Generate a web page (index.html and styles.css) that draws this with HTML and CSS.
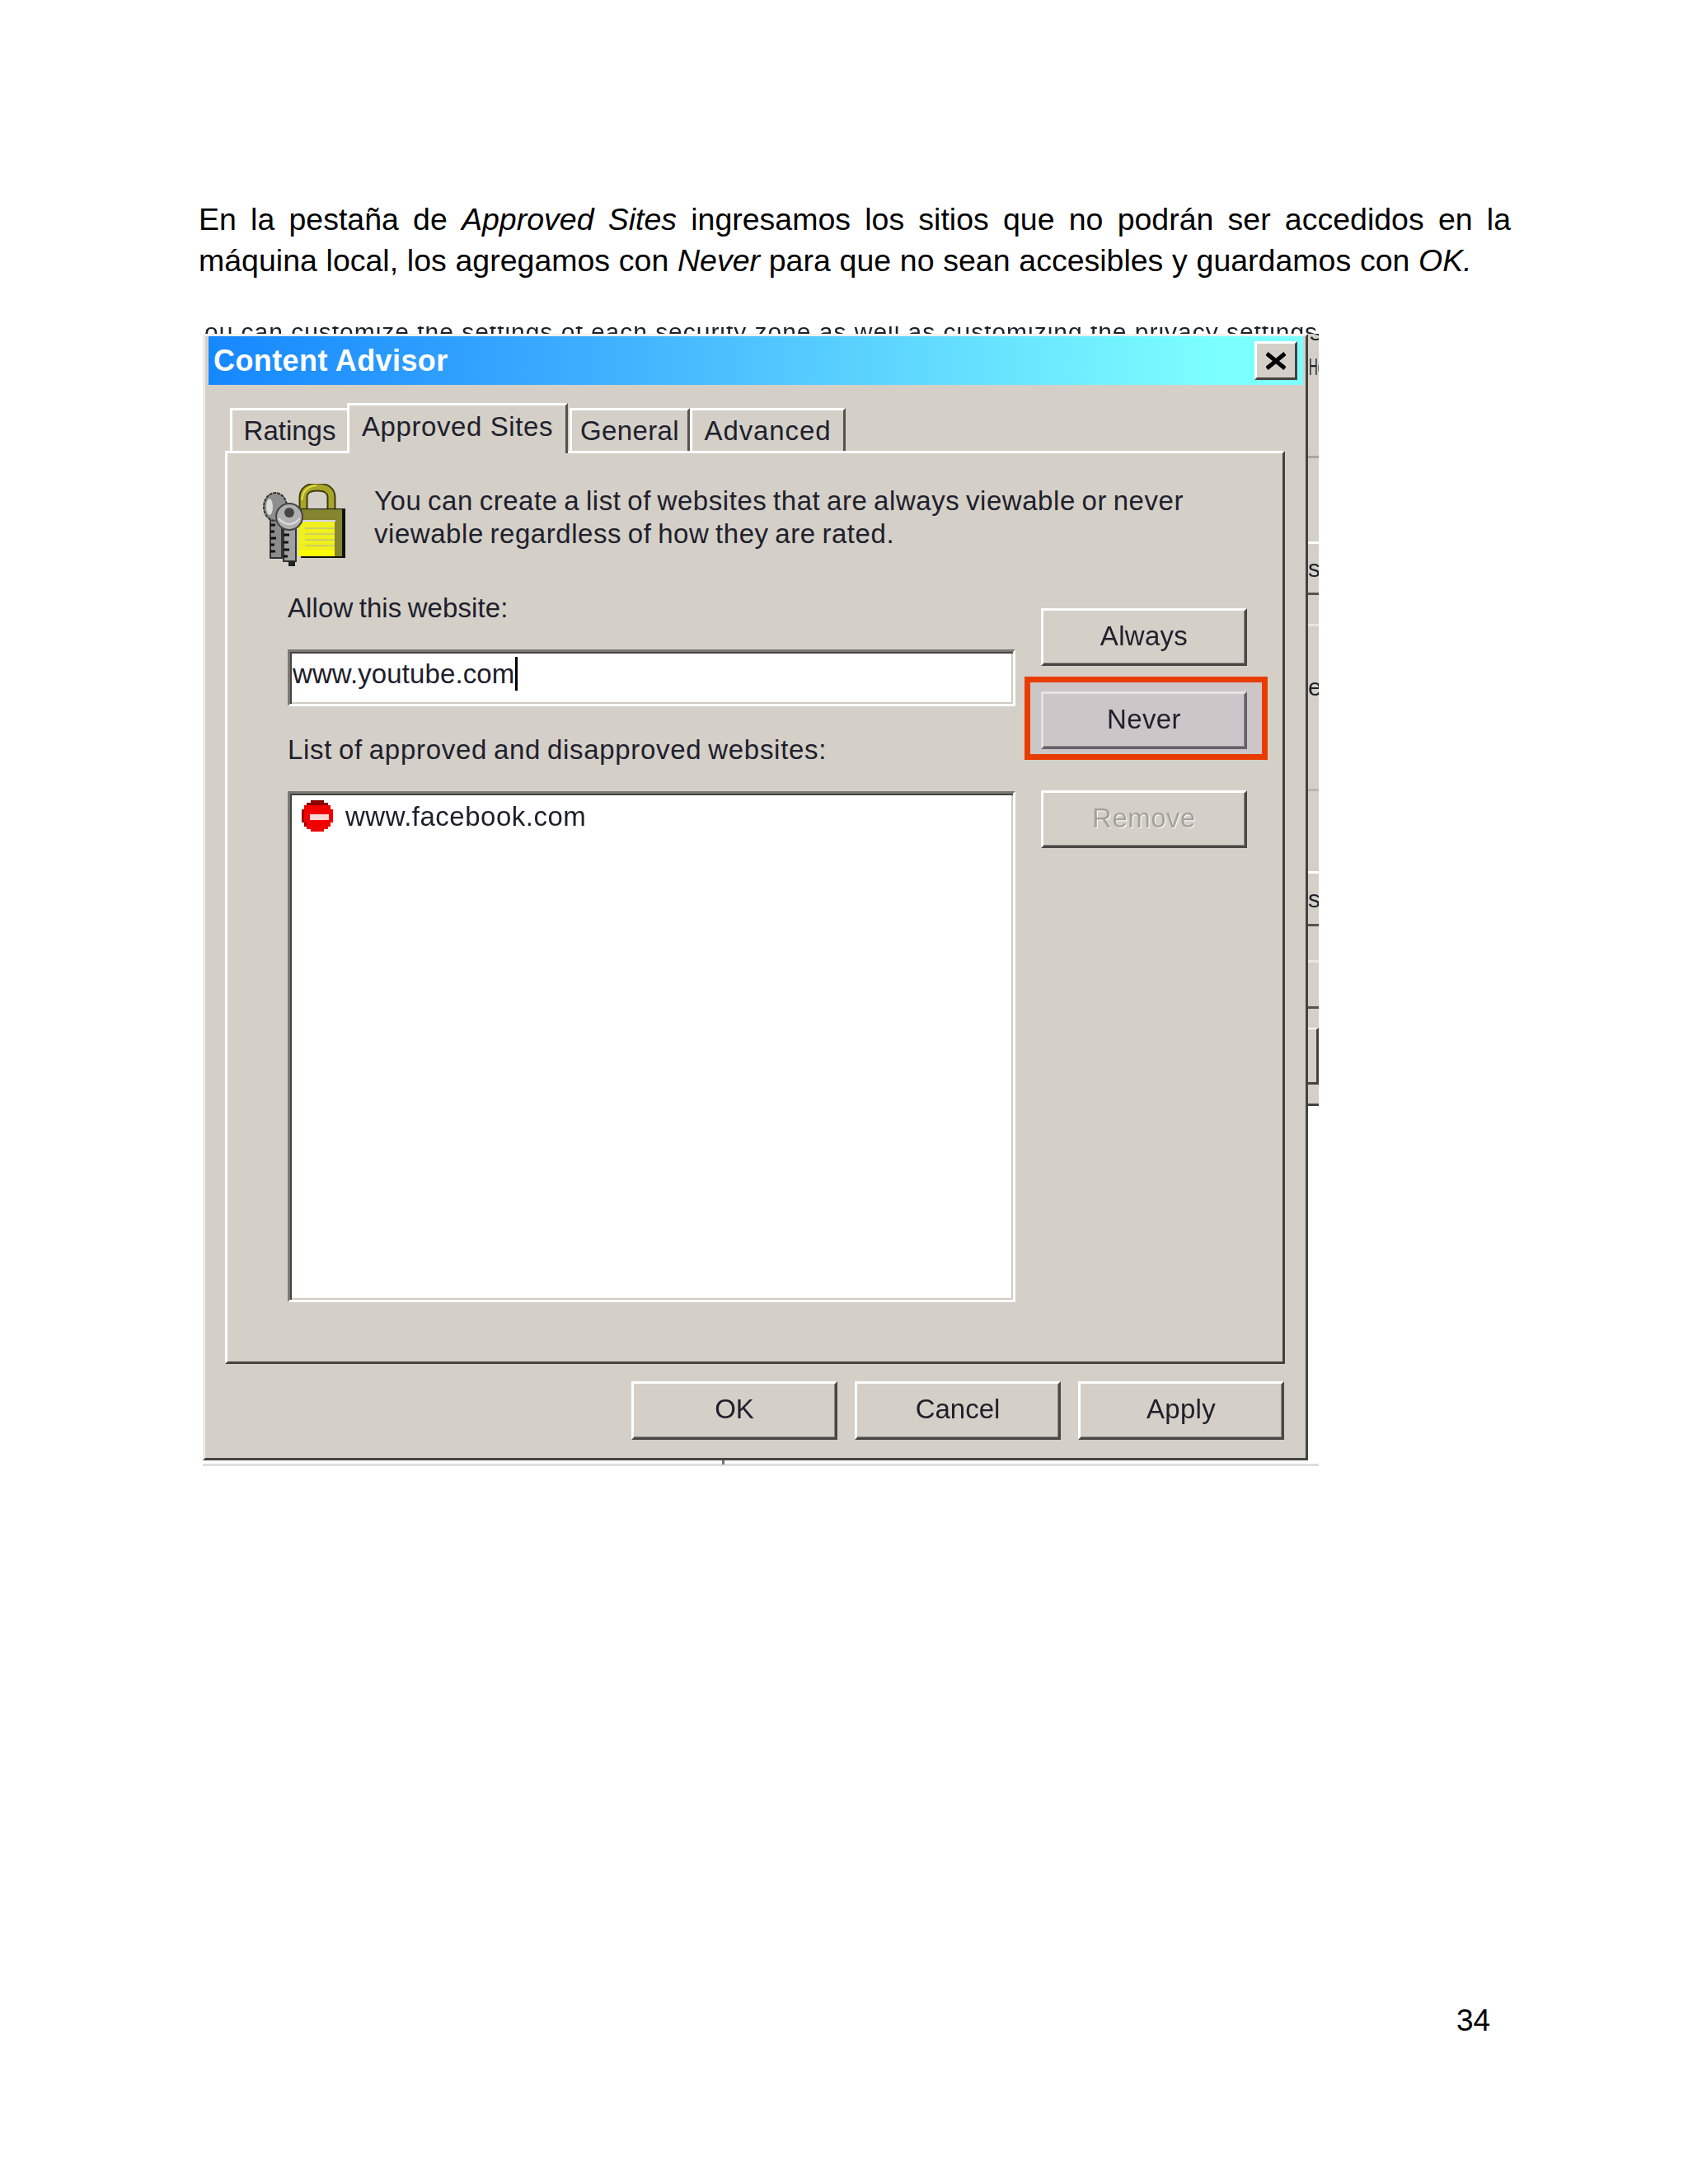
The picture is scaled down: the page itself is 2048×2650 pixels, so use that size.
FILE: index.html
```html
<!DOCTYPE html>
<html lang="es">
<head>
    <meta charset="UTF-8">
    <title>Content Advisor</title>
    <link rel="stylesheet" href="styles.css">
</head>
<body>
    <p class="intro">En la pestaña de <em>Approved Sites</em> ingresamos los sitios que no podrán ser accedidos en la máquina local, los agregamos con <em>Never</em> para que no sean accesibles y guardamos con <em>OK.</em></p>

    <div class="shot">
        <div class="behind-text">ou can customize the settings of each security zone as well as customizing the privacy settings</div>
        <div class="shot-row">
            <div class="dialog">
                <div class="titlebar">
                    <span class="title">Content Advisor</span>
                    <button class="close" aria-label="Close">
                        <svg width="24" height="24" viewBox="0 0 24 24"><path d="M1 3 L23 21 M23 3 L1 21" stroke="#000" stroke-width="5" fill="none"/></svg>
                    </button>
                </div>

                <div class="tabs">
                    <div class="tab tab-ratings">Ratings</div>
                    <div class="tab tab-active">Approved Sites</div>
                    <div class="tab tab-general">General</div>
                    <div class="tab tab-advanced">Advanced</div>
                </div>

                <div class="sheet">
                    <div class="info">
                        <svg class="lock-icon" width="102" height="100" viewBox="0 0 102 100">
                            <!-- shackle -->
                            <path d="M50 36 V17 Q50 4 67 4 Q84 4 84 17 V36" fill="none" stroke="#3a3a10" stroke-width="11"/>
                            <path d="M50 36 V17 Q50 4 67 4 Q84 4 84 17 V36" fill="none" stroke="#a8a428" stroke-width="7"/>
                            <path d="M48 20 Q50 3 66 2" fill="none" stroke="#e6e23c" stroke-width="2"/>
                            <!-- body -->
                            <rect x="47" y="30" width="54" height="60" fill="#111"/>
                            <rect x="47" y="31" width="50" height="57" fill="#85852f"/>
                            <rect x="44" y="44" width="45" height="2" fill="#d8d4e8"/>
                            <rect x="44" y="46" width="44" height="42" fill="#f0f01c"/>
                            <rect x="52" y="53" width="36" height="2" fill="#cfcf62"/>
                            <rect x="52" y="60" width="36" height="2" fill="#cfcf62"/>
                            <rect x="52" y="67" width="36" height="2" fill="#cfcf62"/>
                            <rect x="52" y="74" width="36" height="2" fill="#cfcf62"/>
                            <rect x="44" y="81" width="44" height="6" fill="#ffff00"/>
                            <!-- back key -->
                            <rect x="10" y="40" width="14" height="50" fill="#8c8c8c" stroke="#333" stroke-width="2"/>
                            <ellipse cx="16" cy="28" rx="14" ry="17" fill="#8e8e8e" stroke="#333" stroke-width="2" stroke-dasharray="4 1"/>
                            <ellipse cx="9" cy="28" rx="4" ry="10" fill="#dcdcdc"/>
                            <path d="M10 50h6 M10 58h5 M10 66h7 M10 74h5 M10 82h6" stroke="#111" stroke-width="3"/>
                            <!-- front key -->
                            <rect x="26" y="52" width="15" height="42" fill="#a0a0a0" stroke="#333" stroke-width="2"/>
                            <circle cx="33" cy="40" r="16" fill="#b0b0b0" stroke="#444" stroke-width="2"/>
                            <circle cx="33" cy="35" r="6" fill="#444"/>
                            <path d="M20 42 Q33 56 46 42" fill="none" stroke="#e0e0e0" stroke-width="2"/>
                            <rect x="32" y="94" width="8" height="6" fill="#222"/>
                            <path d="M26 62h7 M26 71h6 M26 80h7 M26 88h5" stroke="#111" stroke-width="3"/>
                        </svg>
                        <p class="info-text">You can create a list of websites that are always viewable or never<br>viewable regardless of how they are rated.</p>
                    </div>

                    <div class="form">
                        <div class="form-left">
                            <label class="field-label">Allow this website:</label>
                            <div class="site-input">www.youtube.com<span class="caret"></span></div>
                            <label class="field-label list-label">List of approved and disapproved websites:</label>
                            <div class="site-list">
                                <div class="site-row">
                                    <svg class="block-icon" width="38" height="38" viewBox="0 0 38 38" shape-rendering="crispEdges">
                                        <path d="M11 0H27V3H32V6H35V11H38V27H35V32H32V35H27V38H11V35H6V32H3V27H0V11H3V6H6V3H11Z" fill="#f00000"/>
                                        <path d="M11 0H27V3H32V6H6V3H11Z" fill="#8a0000"/>
                                        <path d="M0 11H3V27H6V32H3V27H0Z" fill="#a00000"/>
                                        <rect x="10" y="17" width="23" height="7" fill="#ffd8d8"/>
                                    </svg>
                                    <span class="site-name">www.facebook.com</span>
                                </div>
                            </div>
                        </div>
                        <div class="form-right">
                            <button class="btn btn-always">Always</button>
                            <div class="marked">
                                <button class="btn btn-never">Never</button>
                            </div>
                            <button class="btn btn-remove" disabled>Remove</button>
                        </div>
                    </div>
                </div>

                <div class="footer">
                    <button class="btn">OK</button>
                    <button class="btn">Cancel</button>
                    <button class="btn btn-apply">Apply</button>
                </div>
            </div>

            <div class="behind-edge">
                <div class="edge-top"><span>s</span></div>
                <div class="edge-seg edge-a"><span>Hc</span></div>
                <div class="edge-seg edge-b"></div>
                <div class="edge-seg edge-c"><span>s</span></div>
                <div class="edge-seg edge-d"></div>
                <div class="edge-seg edge-e"><span>e</span></div>
                <div class="edge-seg edge-f"></div>
                <div class="edge-seg edge-g"><span>s</span></div>
                <div class="edge-seg edge-h"></div>
                <div class="edge-seg edge-i"></div>
                <div class="edge-thumb-wrap"><div class="edge-thumb"></div></div>
                <div class="edge-seg edge-j"></div>
            </div>
        </div>
        <div class="behind-bottom"><span class="tick"></span></div>
    </div>

    <div class="page-number">34</div>
</body>
</html>
```

FILE: styles.css
```css
* {
    box-sizing: border-box;
}

html, body {
    margin: 0;
    background: #fff;
}

body {
    height: 2650px;
    overflow: hidden;
    font-family: "Liberation Sans", Arial, sans-serif;
    color: #000;
}

.intro {
    margin: 0 0 0 241px;
    padding-top: 241px;
    width: 1592px;
    font-size: 37.5px;
    line-height: 50px;
    text-align: justify;
    word-spacing: 0.3px;
}

/* screenshot of the dialog, soft like the scaled original */
.shot {
    margin: 55px 0 0 246px;
    width: 1354px;
    font-size: 33px;
    color: #20202c;
    filter: blur(0.4px);
}

.behind-text {
    height: 9px;
    line-height: 13px;
    overflow: hidden;
    white-space: nowrap;
    font-size: 30px;
    letter-spacing: 0.97px;
    padding-left: 2px;
}

.shot-row {
    display: flex;
}

.dialog {
    width: 1341px;
    height: 1367px;
    flex: none;
    background: #d4d0c8;
    border: 3px solid;
    border-color: #f4f2ee #45433f #45433f #eeece8;
    padding: 0 3px 0 4px;
}

.titlebar {
    height: 59px;
    display: flex;
    align-items: center;
    justify-content: space-between;
    padding: 0 7px 0 6px;
    background: linear-gradient(to right, #1688ff, #38a8ff 30%, #66e0ff 70%, #7cffff 92%);
}

.title {
    color: #fff;
    font-size: 36px;
    font-weight: bold;
    letter-spacing: 0.4px;
}

.close {
    width: 52px;
    height: 47px;
    padding: 0;
    display: flex;
    align-items: center;
    justify-content: center;
    background: #d4d0c8;
    border: 3px solid;
    border-color: #fff #45433f #45433f #fff;
}

.tabs {
    display: flex;
    align-items: flex-end;
    margin: 22px 0 0 26px;
    height: 58px;
}

.tab {
    position: relative;
    height: 52px;
    display: flex;
    align-items: center;
    justify-content: center;
    background: #d4d0c8;
    border-top: 3px solid #fff;
    border-left: 3px solid #fff;
    border-right: 3px solid #55534f;
    letter-spacing: 0.4px;
}

.tab-ratings {
    width: 142px;
    border-right: 0;
    letter-spacing: 0;
}

.tab-active {
    z-index: 1;
    width: 268px;
    height: 61px;
    margin-bottom: -3px;
    padding-bottom: 6px;
    letter-spacing: 0.6px;
}

.tab-general {
    width: 146px;
    margin-left: 2px;
}

.tab-advanced {
    width: 189px;
    letter-spacing: 0.9px;
}

.sheet {
    height: 1108px;
    margin: 0 22px 0 20px;
    padding: 37px 0 0 42px;
    border: 3px solid;
    border-color: #fff #45433f #45433f #fff;
}

.info {
    display: flex;
    gap: 34px;
    height: 131px;
}

.lock-icon {
    flex: none;
}

.info-text {
    margin: 1px 0 0;
    line-height: 40px;
    word-spacing: -2px;
    letter-spacing: 0.55px;
}

.form {
    display: grid;
    grid-template-columns: 883px 250px;
    column-gap: 31px;
    margin-left: 31px;
}

.field-label {
    display: block;
    line-height: 40px;
    word-spacing: -2px;
    letter-spacing: 0.1px;
}

.list-label {
    margin-top: 33px;
    letter-spacing: 0.7px;
}

.site-input {
    display: flex;
    align-items: center;
    height: 69px;
    margin-top: 30px;
    padding: 0 0 10px 3px;
    background: #fff;
    border: 3px solid;
    border-color: #7a7875 #fff #fff #7a7875;
    box-shadow: inset 2px 2px 0 #45433f, inset -2px -2px 0 #cfcbc3;
    letter-spacing: 0.1px;
}

.caret {
    width: 3px;
    height: 41px;
    margin-left: 1px;
    background: #000;
}

.site-list {
    height: 620px;
    margin-top: 30px;
    padding: 6px 0 0 14px;
    background: #fff;
    border: 3px solid;
    border-color: #7a7875 #fff #fff #7a7875;
    box-shadow: inset 2px 2px 0 #45433f, inset -2px -2px 0 #cfcbc3;
}

.site-row {
    display: flex;
    align-items: center;
    gap: 15px;
    letter-spacing: 0.5px;
}

.site-name {
    padding-top: 3px;
}

.block-icon {
    flex: none;
}

.form-right {
    display: flex;
    flex-direction: column;
    padding-top: 20px;
}

.btn {
    display: block;
    width: 250px;
    height: 70px;
    padding: 0 0 3px;
    font-family: inherit;
    font-size: 33px;
    color: #20202c;
    background: #d4d0c8;
    border: 3px solid;
    border-color: #fff #4a4844 #4a4844 #fff;
    box-shadow: inset -1px -1px 0 #8a8884;
}

.btn-always {
    letter-spacing: 0.3px;
}

.btn-never {
    background: #cdc6c8;
    border-color: #e8e0e4 #66606a #66606a #e8e0e4;
    letter-spacing: 0.4px;
}

.btn-remove {
    margin-top: 37px;
    color: #a4a29c;
    text-shadow: 1px 1px 0 #fff;
    letter-spacing: 0.5px;
}

/* red box drawn over the screenshot */
.marked {
    margin: 13px -25px 0 -20px;
    padding: 11px 18px 6px 13px;
    background: #cdc6c6;
    border: 7px solid #e83c00;
}

.footer {
    display: flex;
    justify-content: flex-end;
    gap: 21px;
    margin: 21px 23px 0 0;
}

.footer .btn {
    height: 71px;
}

.btn-apply {
    letter-spacing: 0.3px;
}

/* bits of the window behind the dialog */
.behind-edge {
    width: 13px;
    height: 1367px;
    display: flex;
    flex-direction: column;
    background: #fff;
    overflow: hidden;
    font-size: 30px;
    line-height: 30px;
}

.edge-top {
    flex: none;
    height: 9px;
    overflow: hidden;
    line-height: 1px;
    background: #d4d0c8;
}

.edge-top span {
    display: block;
    margin: -3px 0 0 2px;
}

.edge-seg {
    flex: none;
    display: flex;
    align-items: center;
    background: #d4d0c8;
    border-bottom: 3px solid #e8e6e2;
    color: #20202c;
}

.edge-seg span {
    white-space: nowrap;
}

.edge-a { height: 142px; padding-bottom: 78px; border-bottom-color: #a8a6a0; }
.edge-a span { margin-left: 1px; transform: scaleX(0.5); transform-origin: left; }
.edge-b { height: 104px; border-bottom-color: #fff; }
.edge-c { height: 62px; border-bottom-color: #55534f; }
.edge-d { height: 38px; }
.edge-e { height: 200px; padding-bottom: 50px; border-bottom-color: #b8b6b0; }
.edge-f { height: 100px; border-bottom-color: #fff; }
.edge-g { height: 64px; border-bottom-color: #55534f; }
.edge-h { height: 44px; }
.edge-i { height: 56px; border-bottom-color: #55534f; }

.edge-thumb-wrap {
    flex: none;
    padding-top: 23px;
    background: #d4d0c8;
}

.edge-thumb {
    height: 69px;
    border-top: 2px solid #fff;
    border-right: 3px solid #45433f;
    border-bottom: 3px solid #45433f;
}

.edge-j { height: 26px; border-bottom-color: #45433f; }

.behind-bottom {
    position: relative;
    height: 3px;
    margin-top: 4px;
    background: #dededc;
}

.tick {
    position: absolute;
    left: 630px;
    top: -4px;
    width: 3px;
    height: 5px;
    background: #777;
}

.page-number {
    margin: 647px 0 0 1767px;
    font-size: 37px;
    line-height: 51px;
}
```
